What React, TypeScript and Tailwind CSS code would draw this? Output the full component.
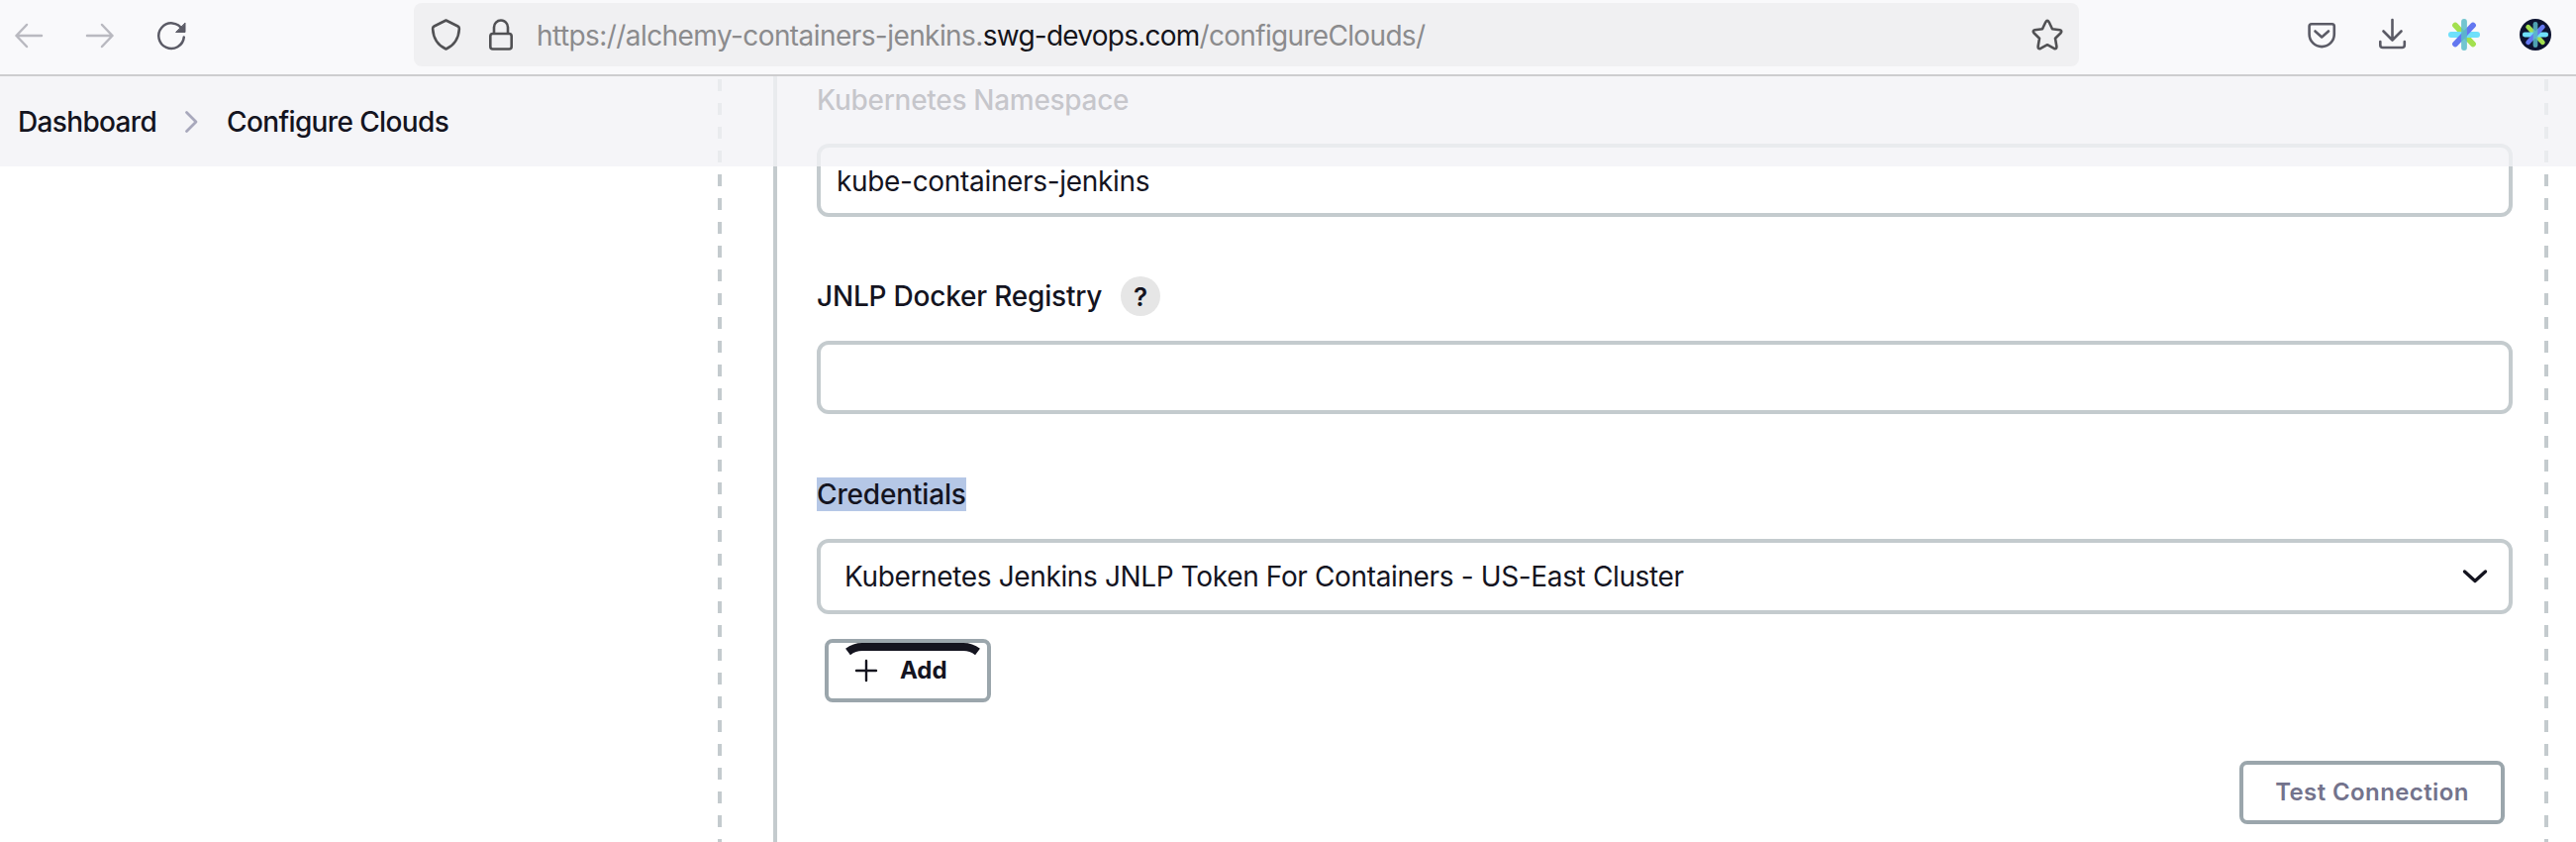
import React from "react";

const rail =
  "w-1 shrink-0 bg-[repeating-linear-gradient(to_bottom,#c4cbce_0px,#c4cbce_12px,transparent_12px,transparent_23.97px)] mt-[3px]";

function Asterisk({ s }: { s: number }) {
  return (
    <g strokeLinecap="round" strokeWidth="5.8" transform={`translate(16 16) scale(${s})`} fill="none">
      <path d="M-9-9.500 9 9.500" stroke="#a3e04f" />
      <path d="M-13.100 0H13.100" stroke="#6fe0fb" />
      <path d="M-9 9.500 9-9.500" stroke="#6377f0" />
      <path d="M0-13.100V13.100" stroke="#5bbcc8" strokeOpacity=".85" />
    </g>
  );
}

function Toolbar() {
  return (
    <header className="flex h-[77px] shrink-0 border-b-2 border-[#cdcdcf] bg-[#f9f9fb]">
      <svg width="418" height="75" fill="none" strokeLinecap="round" strokeLinejoin="round" strokeWidth="2.5">
        <path d="M42 36H16.5M27 25 16.5 36 27 47" stroke="#b9b9c0" />
        <path d="M88 36h25.5M103 25l10.500 11L103 47" stroke="#b9b9c0" />
        <path d="M184 29.500A12.800 12.800 0 1 0 185.800 37.500" stroke="#5b5b66" />
        <path d="M187 23.500V32.500H178Z" fill="#5b5b66" stroke="#5b5b66" strokeWidth="1" />
      </svg>
      <div className="mt-[3px] flex h-16 w-[1682px] items-center rounded-lg bg-[#f0f0f2]">
        <svg width="124" height="64" fill="none" stroke="#515154" strokeWidth="2.6" strokeLinejoin="round">
          <path d="M32.500 17.500 44.500 23.500Q46 24.300 45.900 26C45.300 36 41.500 42.500 32.500 46.500C23.500 42.500 19.700 36 19.100 26Q19 24.300 20.500 23.500Z" />
          <rect x="77.300" y="31" width="21.400" height="15.500" rx="2.500" />
          <path d="M81 31V24.500a7 7 0 0 1 14 0V31" />
        </svg>
        <div className="flex-1 pt-0.5 text-[28px] whitespace-pre text-[#8b8b8d]">
          <span className="tracking-[-0.57px]">https://alchemy-containers-jenkins.</span>
          <span className="tracking-[-0.77px] text-[#15141a]">swg-devops.com</span>
          <span className="tracking-[-0.67px]">/configureClouds/</span>
        </div>
        <svg className="mr-4" width="32" height="32" fill="none" stroke="#515154" strokeWidth="2.6" strokeLinejoin="round">
          <path d="M14.300 3.300Q16 .500 17.700 3.300L21 10.200 28.700 11.300Q31.300 12 29.600 14.300L24 19.700 25.400 28Q25.500 30.800 22.800 29.900L16 26.200 9.200 29.900Q6.500 30.800 6.600 28L8 19.700 2.400 14.300Q.700 12 3.300 11.300L11 10.200Z" />
        </svg>
      </div>
      <svg width="502" height="75" fill="none" stroke="#5b5b66" strokeWidth="2.600" strokeLinecap="round" strokeLinejoin="round">
        <path d="M235 24.300h20.500q2.300 0 2.300 2.300V34.500a12.500 12.500 0 0 1-25.200 0V26.600q0-2.300 2.400-2.300Z" />
        <path d="M238.500 31.500 245.200 37.500 252 31.500" />
        <path d="M316.500 20V40M307.500 31.500 316.500 40.500 325.500 31.500M304.300 42V45.500q0 2.500 2.500 2.500h19.500q2.500 0 2.500-2.500V42" />
        <g transform="translate(373 19)" stroke="none"><Asterisk s={1} /></g>
        <g transform="translate(445 19)" stroke="none"><circle cx="16" cy="16" r="16" fill="#0d1330" /><Asterisk s={0.82} /></g>
      </svg>
    </header>
  );
}

function Breadcrumbs() {
  return (
    <nav className="absolute inset-x-0 top-0 flex h-[91px] items-center bg-[#f3f3f6]/80 pl-[18px] text-[28px] font-medium text-[#14141f]">
      <span className="w-[167px] tracking-[-0.66px]">Dashboard</span>
      <svg width="44" height="30" fill="none" stroke="#a8a8bc" strokeWidth="2.800" strokeLinecap="round" strokeLinejoin="round">
        <path d="M3.500 5.500 13 15 3.500 24.500" />
      </svg>
      <span className="tracking-[-0.63px]">Configure Clouds</span>
    </nav>
  );
}

const field = "w-[1713px] rounded-xl border-4 border-[#c4cbce] bg-white";

function CloudForm() {
  return (
    <div className="flex w-[1785px] flex-col text-[28px] text-[#14141f]">
      <div className="flex h-[68px] items-start pt-[7px] leading-[34px] font-medium">
        <span className="tracking-[-0.3px]">Kubernetes Namespace</span>
      </div>
      <div className={`${field} flex h-[74px] items-center pt-0.5 pl-4`}>
        <span className="tracking-[-0.32px]">kube-containers-jenkins</span>
      </div>
      <div className="mt-[60px] flex h-10 items-center font-medium">
        <span className="w-[307px] tracking-[-0.2px]">JNLP Docker Registry</span>
        <span className="flex size-10 items-center justify-center rounded-full bg-[#e6e6e6] text-[26px] font-semibold">?</span>
      </div>
      <div className={`${field} mt-[25px] h-[74px]`} />
      <div className="mt-16 flex h-[34px] font-medium">
        <span className="bg-[#b5c7e6] leading-[34px] tracking-[-0.16px]">Credentials</span>
      </div>
      <div className={`${field} mt-7 flex h-[76px] items-center justify-between pl-6`}>
        <span className="tracking-[-0.36px]">Kubernetes Jenkins JNLP Token For Containers - US-East Cluster</span>
        <svg className="mr-5" width="28" height="20" fill="none" stroke="#14141f" strokeWidth="3.400" strokeLinecap="round" strokeLinejoin="round">
          <path d="M3.500 5 14 14.500 24.500 5" />
        </svg>
      </div>
      <button className="relative mt-[25px] ml-2 flex h-16 w-[168px] items-center rounded-lg border-4 border-[#9ba6ac] bg-white">
        <svg className="absolute top-0 left-[15px]" width="140" height="14" fill="none" stroke="#14141f" strokeWidth="8">
          <path d="M4.500 9Q11 4 19 4H121Q129 4 135.500 9" />
        </svg>
        <svg className="ml-[26px]" width="24" height="24" fill="none" stroke="#14141f" strokeWidth="2.400" strokeLinecap="round">
          <path d="M12 2V22M2 12H22" />
        </svg>
        <span className="ml-[22px] text-2xl font-bold">Add</span>
      </button>
      <button className="mt-[59px] ml-[1437px] flex h-16 w-[268px] items-center justify-center rounded-lg border-4 border-[#9ba6ac] bg-white text-2xl font-semibold tracking-[0.4px] text-[#73738c]">
        Test Connection
      </button>
    </div>
  );
}

export default function App() {
  return (
    <div className="flex h-[850px] w-[2602px] flex-col overflow-hidden bg-white font-['Inter','Liberation_Sans',sans-serif]">
      <Toolbar />
      <main className="relative flex min-h-0 flex-1">
        <div className="flex flex-1 pl-[725px]">
          <div className={rail} />
          <div className="ml-[52px] w-1 shrink-0 bg-[#c4cbce]" />
          <div className="ml-10 w-[1745px] shrink-0">
            <CloudForm />
          </div>
          <div className={rail} />
        </div>
        <Breadcrumbs />
      </main>
    </div>
  );
}
